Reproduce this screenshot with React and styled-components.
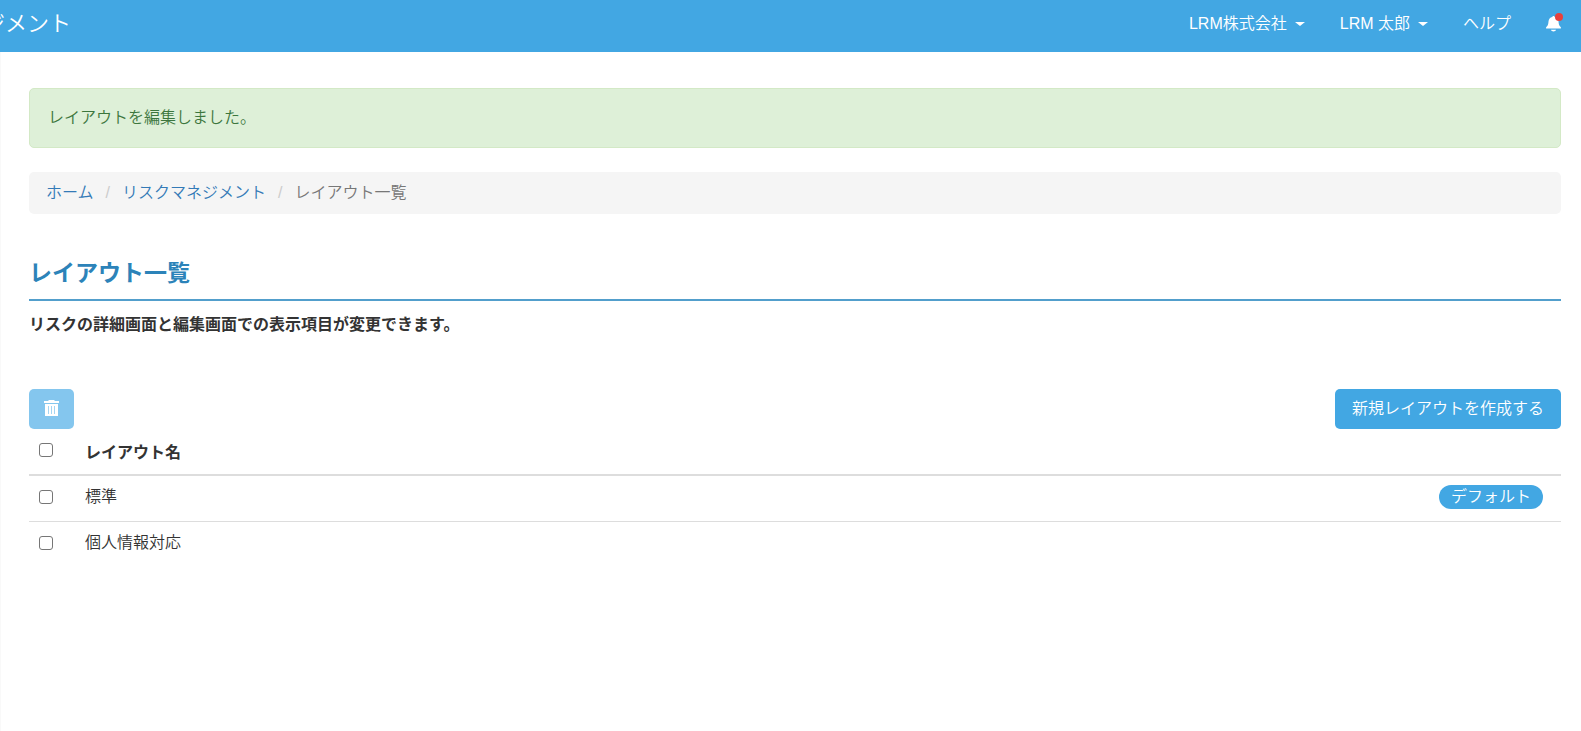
import React from "react";
import styled, { createGlobalStyle } from "styled-components";

const GlobalStyle = createGlobalStyle`
  *, *::before, *::after { box-sizing: border-box; }
  body {
    margin: 0;
    background: #fff;
    color: #333;
    font-family: "Liberation Sans", "Noto Sans CJK JP", sans-serif;
    font-size: 16px;
    font-weight: 350;
    line-height: 24px;
  }
  button, input { font: inherit; }
`;

const Navbar = styled.header`
  display: flex;
  align-items: center;
  justify-content: space-between;
  height: 52px;
  padding: 0 20px 5px 0;
  background: #42a7e3;
  color: #fff;
  overflow: hidden;
`;

const Brand = styled.div`
  margin-left: -17px;
  font-size: 22px;
  line-height: 32px;
  white-space: nowrap;
`;

const NavMenu = styled.nav`
  display: flex;
  align-items: center;
  gap: 35px;
`;

const NavButton = styled.button`
  display: flex;
  align-items: center;
  gap: 8px;
  padding: 0;
  border: 0;
  background: none;
  color: #fff;
  white-space: nowrap;
  cursor: pointer;
`;

const Caret = styled.span`
  margin-top: 1px;
  border-top: 4px solid #fff;
  border-left: 5px solid transparent;
  border-right: 5px solid transparent;
`;

const NavLink = styled.a`
  color: #fff;
  text-decoration: none;
`;

const BellButton = styled.button`
  position: relative;
  display: flex;
  padding: 0;
  border: 0;
  background: none;
  cursor: pointer;
`;

const Dot = styled.span`
  position: absolute;
  top: -2px;
  right: -2px;
  width: 8px;
  height: 8px;
  border-radius: 50%;
  background: #e8403c;
`;

const Main = styled.main`
  min-height: calc(100vh - 52px);
  padding: 36px 20px 0 28px;
  border-left: 1px solid #f9f9f9;
`;

const Alert = styled.div`
  padding: 17px 18px;
  border: 1px solid #d3e9c6;
  border-radius: 5px;
  background: #def0d8;
  color: #3c763d;
`;

const Breadcrumb = styled.ol`
  display: flex;
  margin: 24px 0 43px;
  padding: 9px 17px;
  list-style: none;
  border-radius: 5px;
  background: #f5f5f5;
  color: #777;
`;

const Crumb = styled.li`
  & + &::before {
    content: "/";
    padding: 0 12px;
    color: #ccc;
  }
`;

const CrumbLink = styled.a`
  color: #337ab7;
  text-decoration: none;
`;

const Title = styled.h1`
  margin: 0;
  padding-bottom: 10px;
  border-bottom: 2px solid #529fcc;
  color: #2c83b9;
  font-size: 23px;
  line-height: 32px;
`;

const Lead = styled.p`
  margin: 12px 0 52px;
  font-weight: bold;
`;

const Toolbar = styled.div`
  display: flex;
  justify-content: space-between;
`;

const Button = styled.button`
  display: flex;
  align-items: center;
  height: 40px;
  padding: 0 ${(p) => (p.$icon ? 15 : 17)}px 1px;
  border: 0;
  border-radius: 5px;
  background: #42a7e3;
  color: #fff;
  cursor: pointer;

  &:disabled { background: #84c6ee; cursor: not-allowed; }
`;

const Table = styled.table`
  width: 100%;
  border-collapse: collapse;
`;

const HeadCell = styled.th`
  height: 46px;
  padding: ${(p) => (p.$check ? "0 10px 3px" : "2px 10px 0")};
  border-bottom: 2px solid #ddd;
  text-align: left;
`;

const Cell = styled.td`
  height: 46px;
  padding: 0 10px 2px;
  text-align: ${(p) => (p.$end ? "right" : "left")};

  tr + tr > & { border-top: 1px solid #ddd; }
`;

const CheckCol = styled.col`
  width: 46px;
`;

const Check = styled.input`
  display: block;
  width: 14px;
  height: 14px;
  margin: 0;
  appearance: none;
  border: 1px solid #767676;
  border-radius: 3px;
  background: #fff;

  &:checked { background: #42a7e3; }
`;

const Badge = styled.span`
  display: inline-block;
  margin-right: 8px;
  padding: 0 12px;
  border-radius: 12px;
  background: #42a7e3;
  color: #fff;
  line-height: 24px;
`;

const BellIcon = () => (
  <svg width="15" height="17" viewBox="0 0 15 17" fill="#fff" aria-hidden="true">
    <path d="M6.3 2.1C6.3.6 8.7.6 8.7 2.1c2.4.5 3.6 2.3 3.8 4.5.2 2.7.6 4.2 2.2 5.4.4.5.3 1.3 0 1.6H.3c-.4-.4-.3-1.1 0-1.6 1.7-1.2 2-2.8 2.2-5.4C2.7 4.4 4 2.6 6.3 2.1ZM5 14.8h5c-.3 2.3-4.7 2.3-5 0Z" />
  </svg>
);

const TrashIcon = () => (
  <svg width="15" height="17" viewBox="0 0 15 17" aria-hidden="true">
    <path fill="#fff" d="M0 1h4L5 0h5l1 1h4v2H0ZM1 4h13v12H1Z" />
    <path stroke="#a5d5f2" d="M4.500 6v8M7.500 6v8M10.500 6v8" />
  </svg>
);

const layouts = [
  { name: "標準", isDefault: true },
  { name: "個人情報対応", isDefault: false },
];

export default function App() {
  return (
    <>
      <GlobalStyle />
      <Navbar>
        <Brand>ジメント</Brand>
        <NavMenu>
          <NavButton>LRM株式会社<Caret /></NavButton>
          <NavButton>LRM 太郎<Caret /></NavButton>
          <NavLink href="#help">ヘルプ</NavLink>
          <BellButton aria-label="通知"><BellIcon /><Dot /></BellButton>
        </NavMenu>
      </Navbar>
      <Main>
        <Alert role="status">レイアウトを編集しました。</Alert>
        <Breadcrumb>
          <Crumb><CrumbLink href="#home">ホーム</CrumbLink></Crumb>
          <Crumb><CrumbLink href="#risk">リスクマネジメント</CrumbLink></Crumb>
          <Crumb aria-current="page">レイアウト一覧</Crumb>
        </Breadcrumb>
        <Title>レイアウト一覧</Title>
        <Lead>リスクの詳細画面と編集画面での表示項目が変更できます。</Lead>
        <Toolbar>
          <Button $icon disabled aria-label="削除"><TrashIcon /></Button>
          <Button>新規レイアウトを作成する</Button>
        </Toolbar>
        <Table>
          <colgroup><CheckCol /><col /><col /></colgroup>
          <thead>
            <tr>
              <HeadCell $check><Check type="checkbox" aria-label="すべて選択" /></HeadCell>
              <HeadCell scope="col">レイアウト名</HeadCell>
              <HeadCell />
            </tr>
          </thead>
          <tbody>
            {layouts.map((l) => (
              <tr key={l.name}>
                <Cell><Check type="checkbox" aria-label={l.name} /></Cell>
                <Cell>{l.name}</Cell>
                <Cell $end>{l.isDefault && <Badge>デフォルト</Badge>}</Cell>
              </tr>
            ))}
          </tbody>
        </Table>
      </Main>
    </>
  );
}
